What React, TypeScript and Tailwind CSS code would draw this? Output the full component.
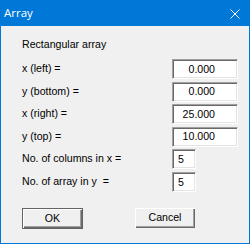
import * as React from "react";

const rows = [
  { label: "x (left) =", value: "0.000", small: false },
  { label: "y (bottom) =", value: "0.000", small: false },
  { label: "x (right) =", value: "25.000", small: false },
  { label: "y (top) =", value: "10.000", small: false },
  { label: "No. of columns in x =", value: "5", small: true },
  { label: "No. of array in y  =", value: "5", small: true },
];

function Field({ value, small }: { value: string; small: boolean }) {
  return (
    <div
      className={
        "flex h-[20px] items-center border-t border-l border-r border-b border-t-[#a0a0a0] border-l-[#a0a0a0] border-r-white border-b-white bg-white shadow-[inset_1px_1px_0_#696969,inset_-1px_-1px_0_#e3e3e3] " +
        (small ? "w-[24px] justify-start pl-[5px]" : "w-[66px] justify-end pr-[22px]")
      }
    >
      <span className="leading-none">{value}</span>
    </div>
  );
}

export default function App() {
  return (
    <div className="h-[245px] w-[250px] bg-white">
      <div
        className="flex h-[244px] w-[250px] flex-col border-x border-b border-[#0078d7] bg-[#f0f0f0] text-[10.6px] text-black"
        style={{ fontFamily: '"Liberation Sans", Arial, sans-serif' }}
      >
        <div className="-mx-px flex h-[26px] shrink-0 items-center justify-between bg-[#0078d7] pl-[4px] pr-[10px] text-white">
          <span className="text-[11.5px]" style={{ fontFamily: '"Open Sans", sans-serif' }}>
            Array
          </span>
          <svg width="10" height="10" viewBox="0 0 10 10" className="mt-[1px]">
            <path d="M0.5 0.5L9.5 9.5M9.5 0.5L0.5 9.5" stroke="white" strokeWidth="1" />
          </svg>
        </div>

        <div className="flex flex-col pl-[21px] pt-[12px]">
          <div className="h-[13px] leading-[13px]">Rectangular array</div>
          <div className="mt-[8px] flex flex-col gap-[2.6px]">
            {rows.map((r) => (
              <div key={r.label} className="flex h-[20px] items-center">
                <span className="w-[150px] whitespace-pre">{r.label}</span>
                <Field value={r.value} small={r.small} />
              </div>
            ))}
          </div>

          <div className="mt-[16px] flex gap-[52px]">
            <button
              type="button"
              className="flex h-[21px] w-[61px] items-center justify-center border border-[#646464] bg-[#f0f0f0] shadow-[inset_1px_1px_0_#fff,inset_-1px_-1px_0_#696969,inset_-2px_-2px_0_#a0a0a0]"
            >
              OK
            </button>
            <button
              type="button"
              className="flex h-[20px] w-[60px] items-center justify-center bg-[#f0f0f0] shadow-[inset_1px_1px_0_#fff,inset_-1px_-1px_0_#696969,inset_-2px_-2px_0_#a0a0a0]"
            >
              Cancel
            </button>
          </div>
        </div>
      </div>
    </div>
  );
}
